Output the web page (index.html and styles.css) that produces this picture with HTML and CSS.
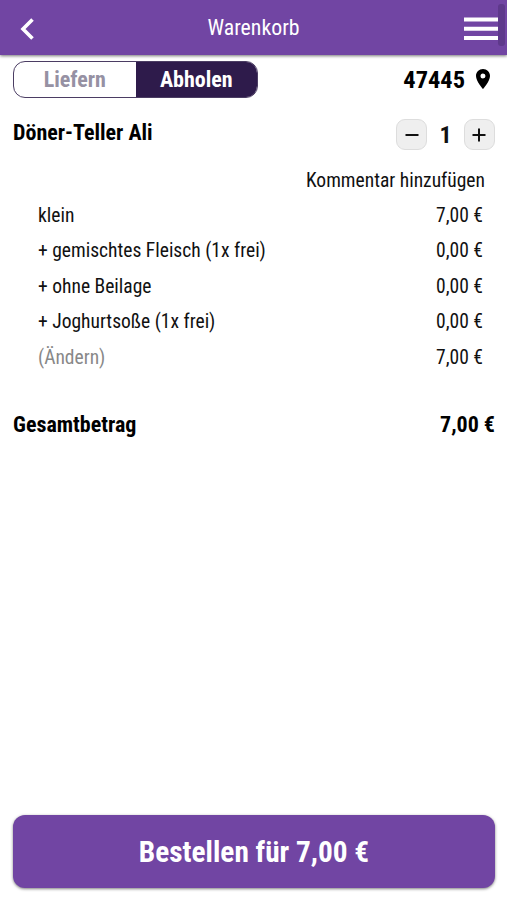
FILE: index.html
```html
<!DOCTYPE html>
<html lang="de">
<head>
<meta charset="utf-8">
<title>Warenkorb</title>
<link rel="stylesheet" href="styles.css">
</head>
<body>
<header class="bar">
  <svg class="back" viewBox="0 0 14 22"><path d="M12.500 1.500 3 11l9.500 9.500" fill="none" stroke="#fff" stroke-width="3.600"/></svg>
  <h1 class="title">Warenkorb</h1>
  <svg class="menu" viewBox="0 0 34 24"><path d="M0 2.500h34M0 11.800h34M0 21h34" stroke="#fff" stroke-width="4"/></svg>
  <span class="scroll"></span>
</header>
<main class="page">
  <section class="mode">
    <div class="toggle"><span class="opt">Liefern</span><span class="opt active">Abholen</span></div>
    <div class="zip"><span>47445</span><svg class="pin" viewBox="5 2 14 20"><path d="M12 2C8.130 2 5 5.130 5 9c0 5.250 7 13 7 13s7-7.750 7-13c0-3.870-3.130-7-7-7zm0 9.500a2.500 2.500 0 1 1 0-5 2.500 2.500 0 0 1 0 5z"/></svg></div>
  </section>
  <section class="item">
    <h2 class="name">Döner-Teller Ali</h2>
    <div class="qty">
      <button class="step"><svg viewBox="0 0 14 14"><path d="M.5 7h13" stroke="#111" stroke-width="2"/></svg></button>
      <span class="count">1</span>
      <button class="step"><svg viewBox="0 0 14 14"><path d="M.5 7h13M7 .5v13" stroke="#111" stroke-width="2"/></svg></button>
    </div>
  </section>
  <div class="comment"><span>Kommentar hinzufügen</span></div>
  <ul class="rows">
    <li><span>klein</span><span>7,00 €</span></li>
    <li><span>+ gemischtes Fleisch (1x frei)</span><span>0,00 €</span></li>
    <li><span>+ ohne Beilage</span><span>0,00 €</span></li>
    <li><span>+ Joghurtsoße (1x frei)</span><span>0,00 €</span></li>
    <li><span class="muted">(Ändern)</span><span>7,00 €</span></li>
  </ul>
  <div class="total"><span>Gesamtbetrag</span><span>7,00 €</span></div>
  <button class="order"><span>Bestellen für 7,00 €</span></button>
</main>
</body>
</html>
```
FILE: styles.css
```css
* { box-sizing: border-box; }
body {
  margin: 0;
  height: 900px;
  display: flex;
  flex-direction: column;
  overflow: hidden;
  background: #fff;
  color: #111;
  font-family: "Roboto Condensed", Roboto, sans-serif;
  font-stretch: 75%;
  font-size: 19.550px;
  white-space: nowrap;
}
h1, h2, ul { margin: 0; padding: 0; list-style: none; }
button { font: inherit; border: 0; padding: 0; }
svg { display: block; }
.bar {
  position: relative;
  flex: none;
  height: 55px;
  padding: 0 9px 0 20px;
  display: flex;
  align-items: center;
  justify-content: space-between;
  background: #7145a3;
  color: #fff;
  box-shadow: 0 1px 3px rgba(0, 0, 0, .55);
}
.back { width: 14px; height: 22px; margin-right: 9px; margin-top: 2px; }
.title { font-size: 21.800px; font-weight: 400; }
.menu { width: 34px; height: 24px; margin-top: 2px; }
.scroll {
  position: absolute;
  right: 2px;
  top: 4px;
  width: 7px;
  height: 42px;
  border-radius: 3px;
  background: #5e398b;
}
.page { flex: 1; display: flex; flex-direction: column; padding: 6px 12px 12px 13px; }
.mode { display: flex; justify-content: space-between; align-items: center; height: 37px; }
.toggle {
  display: flex;
  width: 245px;
  height: 37px;
  border: 1px solid #4b3d63;
  border-radius: 12px;
  overflow: hidden;
  font-size: 22px;
  font-weight: 700;
}
.opt { flex: 1; display: flex; align-items: center; justify-content: center; color: #9691a3; }
.active { background: #2e1b4b; color: #fff; }
.zip { display: flex; align-items: center; gap: 11px; padding-right: 5px; font-size: 24.400px; font-weight: 700; color: #000; }
.pin { width: 14px; height: 20px; margin-top: -2px; }
.item { display: flex; justify-content: space-between; height: 31px; margin-top: 21px; }
.name { font-size: 22px; font-weight: 700; line-height: 27px; color: #000; }
.qty { display: flex; align-items: center; width: 99px; justify-content: space-between; font-weight: 700; }
.count { font-size: 24px; }
.step {
  width: 31px;
  height: 31px;
  border: 1px solid #ddd;
  border-radius: 9px;
  background: #efefef;
  display: flex;
  align-items: center;
  justify-content: center;
}
.step svg { width: 14px; height: 14px; }
.comment { display: flex; justify-content: flex-end; margin-top: 13px; padding-right: 10px; height: 35px; line-height: 35px; }
.rows { padding: 0 12px 0 25px; }
.rows li { display: flex; justify-content: space-between; height: 35.400px; line-height: 35.400px; }
.muted { color: #888; }
.total { display: flex; justify-content: space-between; margin-top: 32px; font-size: 22px; line-height: 36px; font-weight: 700; color: #000; }
.order {
  height: 73px;
  margin-top: auto;
  border-radius: 12px;
  background: #7145a3;
  color: #fff;
  font-size: 29.300px;
  font-weight: 700;
  box-shadow: 0 1px 3px rgba(0, 0, 0, .5);
}
```
